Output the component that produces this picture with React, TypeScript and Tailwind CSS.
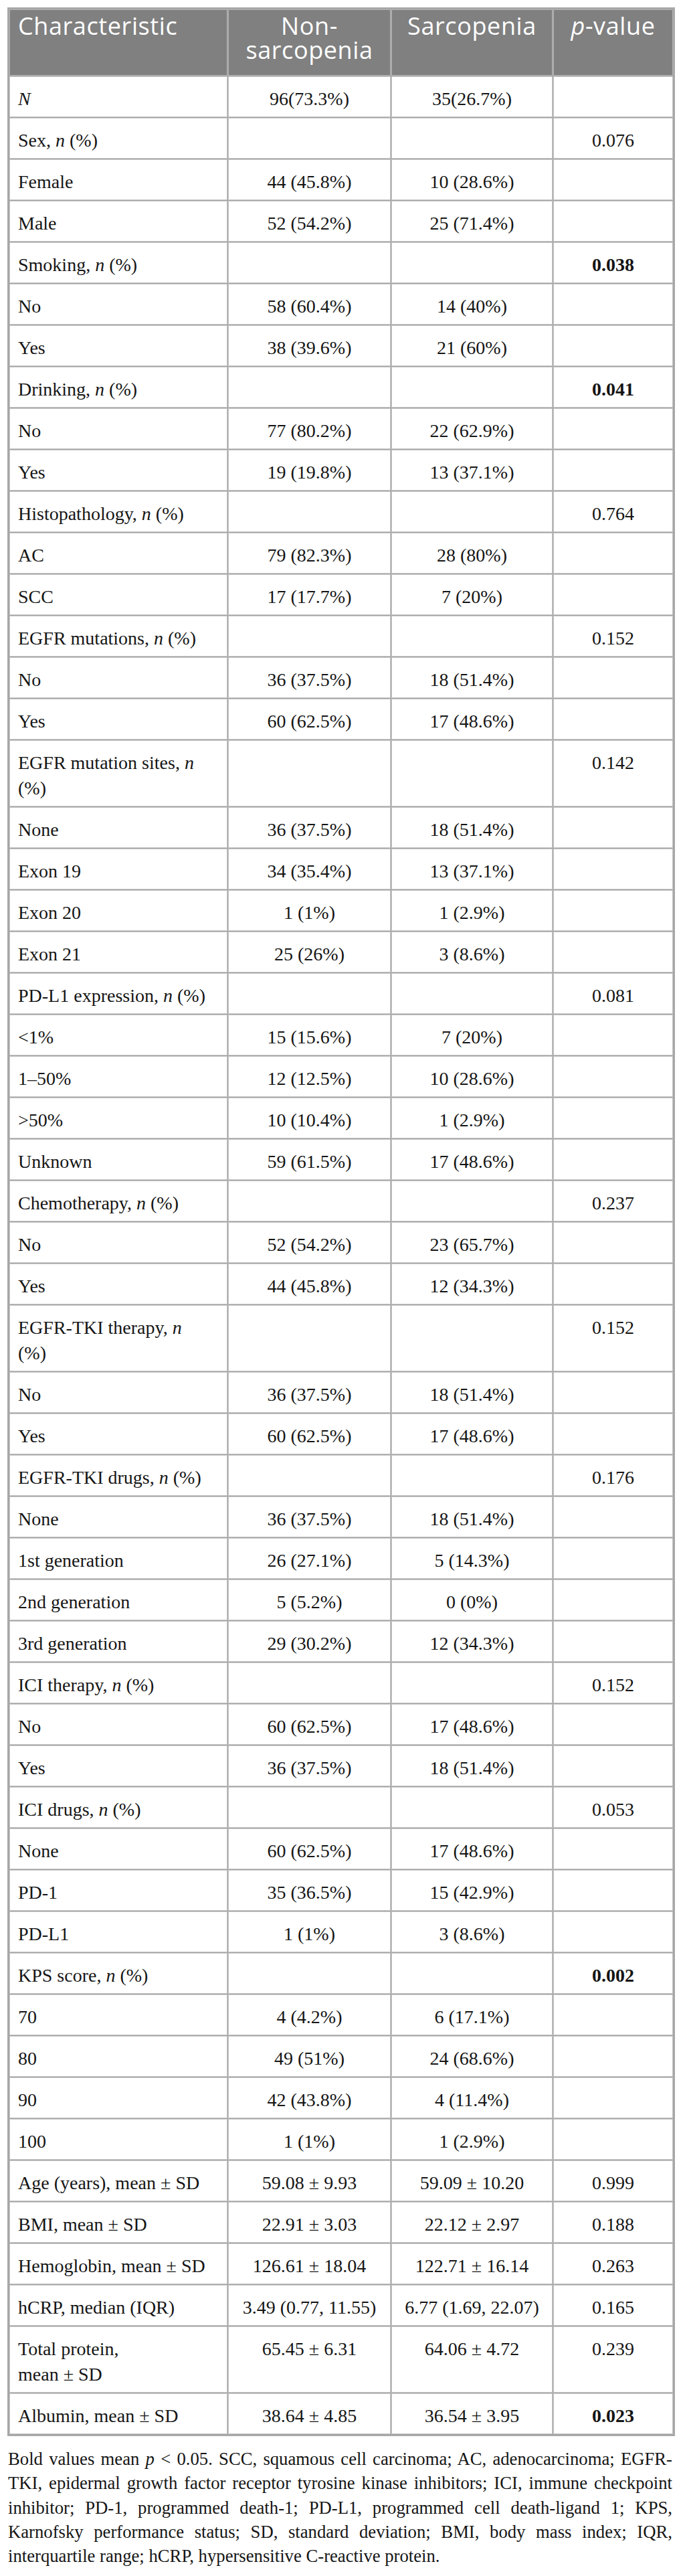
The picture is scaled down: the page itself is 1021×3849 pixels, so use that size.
import React from "react";

type Row = {
  label: React.ReactNode;
  a?: string;
  b?: string;
  p?: string;
  bold?: boolean;
};

const nl = (name: string) => (
  <>
    {name}, <i>n</i> (%)
  </>
);

const rows: Row[] = [
  { label: <i>N</i>, a: "96(73.3%)", b: "35(26.7%)" },
  { label: nl("Sex"), p: "0.076" },
  { label: "Female", a: "44 (45.8%)", b: "10 (28.6%)" },
  { label: "Male", a: "52 (54.2%)", b: "25 (71.4%)" },
  { label: nl("Smoking"), p: "0.038", bold: true },
  { label: "No", a: "58 (60.4%)", b: "14 (40%)" },
  { label: "Yes", a: "38 (39.6%)", b: "21 (60%)" },
  { label: nl("Drinking"), p: "0.041", bold: true },
  { label: "No", a: "77 (80.2%)", b: "22 (62.9%)" },
  { label: "Yes", a: "19 (19.8%)", b: "13 (37.1%)" },
  { label: nl("Histopathology"), p: "0.764" },
  { label: "AC", a: "79 (82.3%)", b: "28 (80%)" },
  { label: "SCC", a: "17 (17.7%)", b: "7 (20%)" },
  { label: nl("EGFR mutations"), p: "0.152" },
  { label: "No", a: "36 (37.5%)", b: "18 (51.4%)" },
  { label: "Yes", a: "60 (62.5%)", b: "17 (48.6%)" },
  {
    label: (
      <>
        EGFR mutation sites, <i>n</i>
        <br />
        (%)
      </>
    ),
    p: "0.142",
  },
  { label: "None", a: "36 (37.5%)", b: "18 (51.4%)" },
  { label: "Exon 19", a: "34 (35.4%)", b: "13 (37.1%)" },
  { label: "Exon 20", a: "1 (1%)", b: "1 (2.9%)" },
  { label: "Exon 21", a: "25 (26%)", b: "3 (8.6%)" },
  { label: nl("PD-L1 expression"), p: "0.081" },
  { label: "<1%", a: "15 (15.6%)", b: "7 (20%)" },
  { label: "1–50%", a: "12 (12.5%)", b: "10 (28.6%)" },
  { label: ">50%", a: "10 (10.4%)", b: "1 (2.9%)" },
  { label: "Unknown", a: "59 (61.5%)", b: "17 (48.6%)" },
  { label: nl("Chemotherapy"), p: "0.237" },
  { label: "No", a: "52 (54.2%)", b: "23 (65.7%)" },
  { label: "Yes", a: "44 (45.8%)", b: "12 (34.3%)" },
  {
    label: (
      <>
        EGFR-TKI therapy, <i>n</i>
        <br />
        (%)
      </>
    ),
    p: "0.152",
  },
  { label: "No", a: "36 (37.5%)", b: "18 (51.4%)" },
  { label: "Yes", a: "60 (62.5%)", b: "17 (48.6%)" },
  { label: nl("EGFR-TKI drugs"), p: "0.176" },
  { label: "None", a: "36 (37.5%)", b: "18 (51.4%)" },
  { label: "1st generation", a: "26 (27.1%)", b: "5 (14.3%)" },
  { label: "2nd generation", a: "5 (5.2%)", b: "0 (0%)" },
  { label: "3rd generation", a: "29 (30.2%)", b: "12 (34.3%)" },
  { label: nl("ICI therapy"), p: "0.152" },
  { label: "No", a: "60 (62.5%)", b: "17 (48.6%)" },
  { label: "Yes", a: "36 (37.5%)", b: "18 (51.4%)" },
  { label: nl("ICI drugs"), p: "0.053" },
  { label: "None", a: "60 (62.5%)", b: "17 (48.6%)" },
  { label: "PD-1", a: "35 (36.5%)", b: "15 (42.9%)" },
  { label: "PD-L1", a: "1 (1%)", b: "3 (8.6%)" },
  { label: nl("KPS score"), p: "0.002", bold: true },
  { label: "70", a: "4 (4.2%)", b: "6 (17.1%)" },
  { label: "80", a: "49 (51%)", b: "24 (68.6%)" },
  { label: "90", a: "42 (43.8%)", b: "4 (11.4%)" },
  { label: "100", a: "1 (1%)", b: "1 (2.9%)" },
  { label: "Age (years), mean ± SD", a: "59.08 ± 9.93", b: "59.09 ± 10.20", p: "0.999" },
  { label: "BMI, mean ± SD", a: "22.91 ± 3.03", b: "22.12 ± 2.97", p: "0.188" },
  { label: "Hemoglobin, mean ± SD", a: "126.61 ± 18.04", b: "122.71 ± 16.14", p: "0.263" },
  { label: "hCRP, median (IQR)", a: "3.49 (0.77, 11.55)", b: "6.77 (1.69, 22.07)", p: "0.165" },
  {
    label: (
      <>
        Total protein,
        <br />
        mean ± SD
      </>
    ),
    a: "65.45 ± 6.31",
    b: "64.06 ± 4.72",
    p: "0.239",
  },
  { label: "Albumin, mean ± SD", a: "38.64 ± 4.85", b: "36.54 ± 3.95", p: "0.023", bold: true },
];

const th =
  "border border-[#b3b3b3] bg-[#808080] align-top pt-[6px] pb-[19px] px-[12px] text-[36px] leading-[36px] tracking-[0.6px] text-white font-normal";
const td =
  "border border-[#c8c8c8] bg-white align-top pt-[14px] pb-[7px] px-[12px] text-[28px] leading-[38px] text-[#151515]";

export default function App() {
  return (
    <div className="bg-white min-h-[3849px] pt-[11px] pl-[11px] pr-[12px] font-['Liberation_Serif',serif]">
      <table className="w-[998px] table-fixed border-separate border-spacing-[1px] border-2 border-[#a9a9a9] bg-[#a3a3a3]">
        <colgroup>
          <col className="w-[326px]" />
          <col className="w-[243px]" />
          <col className="w-[241px]" />
          <col className="w-[179px]" />
        </colgroup>
        <thead className="font-['Open_Sans',sans-serif]">
          <tr>
            <th className={`${th} text-left`}>Characteristic</th>
            <th className={`${th} text-center`}>
              Non-
              <br />
              sarcopenia
            </th>
            <th className={`${th} text-center`}>Sarcopenia</th>
            <th className={`${th} text-center`}>
              <i>p</i>-value
            </th>
          </tr>
        </thead>
        <tbody>
          {rows.map((r, i) => (
            <tr key={i}>
              <td className={`${td} text-left whitespace-nowrap`}>{r.label}</td>
              <td className={`${td} text-center whitespace-nowrap`}>{r.a ?? ""}</td>
              <td className={`${td} text-center whitespace-nowrap`}>{r.b ?? ""}</td>
              <td className={`${td} text-center whitespace-nowrap ${r.bold ? "font-bold" : ""}`}>
                {r.p ?? ""}
              </td>
            </tr>
          ))}
        </tbody>
      </table>
      <div className="mt-[16px] ml-[1px] mr-[4px] text-[26.7px] leading-[36.25px] text-[#151515]">
        <div className="text-justify [text-align-last:justify]">
          Bold values mean <i>p</i> &lt; 0.05. SCC, squamous cell carcinoma; AC, adenocarcinoma; EGFR-
        </div>
        <div className="text-justify [text-align-last:justify]">
          TKI, epidermal growth factor receptor tyrosine kinase inhibitors; ICI, immune checkpoint
        </div>
        <div className="text-justify [text-align-last:justify]">
          inhibitor; PD-1, programmed death-1; PD-L1, programmed cell death-ligand 1; KPS,
        </div>
        <div className="text-justify [text-align-last:justify]">
          Karnofsky performance status; SD, standard deviation; BMI, body mass index; IQR,
        </div>
        <div>interquartile range; hCRP, hypersensitive C-reactive protein.</div>
      </div>
    </div>
  );
}
